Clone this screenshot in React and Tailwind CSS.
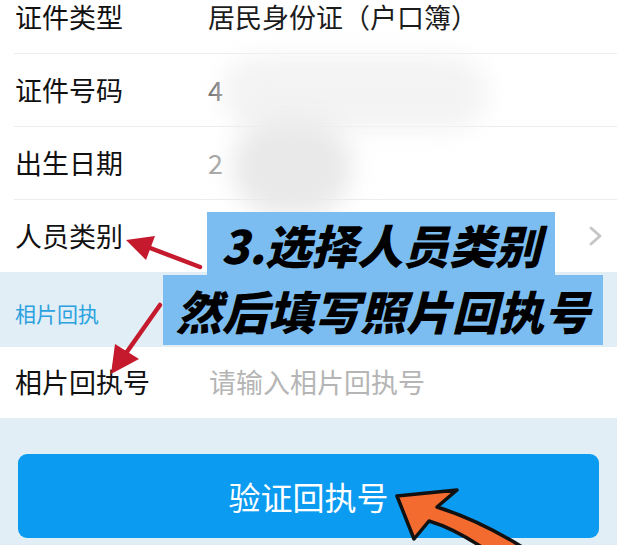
import React from 'react';

const ROWS = [
  { label: '证件类型', value: '居民身份证（户口簿）', tone: 'text-[#1c1c1c]' },
  { label: '证件号码', value: '4', tone: 'text-[#666]' },
  { label: '出生日期', value: '2', tone: 'text-[#a5a5a5]' },
];

function Chevron() {
  return (
    <svg width="16" height="22" viewBox="0 0 16 22" className="ml-auto mr-[13px]">
      <path d="M3 3 L12 11 L3 19" fill="none" stroke="#c6c6c6" strokeWidth="3" strokeLinecap="round" strokeLinejoin="round" />
    </svg>
  );
}

function Annotations() {
  return (
    <svg className="absolute inset-0 pointer-events-none" width="617" height="545" viewBox="0 0 617 545">
      {/* red arrows */}
      <line x1="200" y1="267" x2="145" y2="246" stroke="#c5192d" strokeWidth="4.5" strokeLinecap="round" />
      <polygon points="126,240 155,236 146,260" fill="#c5192d" />
      <line x1="160" y1="305" x2="124" y2="356" stroke="#c5192d" strokeWidth="4.5" strokeLinecap="round" />
      <polygon points="111,374 115,344 139,359" fill="#c5192d" />
      {/* orange arrow */}
      <path
        d="M397 496 L457 490 L437 507 Q482 521 530 552 L489 552 Q456 529 429 521 L414 539 Z"
        fill="#f36b2f"
        stroke="#111"
        strokeWidth="3.5"
        strokeLinejoin="round"
      />
    </svg>
  );
}

export default function App() {
  return (
    <div className="relative w-[617px] h-[545px] overflow-hidden bg-[#e2eef6] font-['Noto_Sans_CJK_SC',sans-serif]">
      <div className="bg-white -mt-[19px]">
        {ROWS.map((r) => (
          <div key={r.label} className="ml-[14px] h-[73px] flex items-center border-b border-[#ececec]">
            <div className="w-[194px] pl-[1px] text-[27px] text-[#111]">{r.label}</div>
            <div className={`text-[27px] ${r.tone}`}>{r.value}</div>
          </div>
        ))}
        <div className="ml-[14px] h-[72px] flex items-center">
          <div className="w-[194px] pl-[1px] text-[27px] text-[#111]">人员类别</div>
          <Chevron />
        </div>
      </div>

      <div className="h-[75px] pl-[15px] pt-[26px] text-[21px] leading-[30px] text-[#2ba2df]">相片回执</div>

      <div className="bg-white h-[71px] pl-[15px] flex items-center">
        <div className="w-[194px] text-[27px] text-[#111]">相片回执号</div>
        <div className="text-[27px] text-[#b5b5b5]">请输入相片回执号</div>
      </div>

      <div className="px-[18px] pt-[36px]">
        <div className="h-[84px] rounded-[9px] bg-[#0b9bf1] flex items-center justify-center text-white text-[32px]">
          验证回执号
        </div>
      </div>

      {/* blurred smudge over id / birthday */}
      <div className="absolute left-[222px] top-[56px] w-[265px] h-[74px] rounded-full bg-[#f3f3f3] blur-md" />
      <div className="absolute left-[232px] top-[118px] w-[120px] h-[98px] rounded-full bg-[#e9e9e9] blur-md" />

      {/* instruction boxes */}
      <div className="absolute left-[207px] top-[212px] w-[348px] h-[64px] bg-[#7cbdf1] flex items-center justify-center">
        <span className="text-[46px] font-black italic text-black leading-none">3.选择人员类别</span>
      </div>
      <div className="absolute left-[163px] top-[275px] w-[440px] h-[70px] bg-[#7cbdf1] flex items-center justify-center">
        <span className="text-[46px] font-black italic text-black leading-none">然后填写照片回执号</span>
      </div>

      <Annotations />
    </div>
  );
}
